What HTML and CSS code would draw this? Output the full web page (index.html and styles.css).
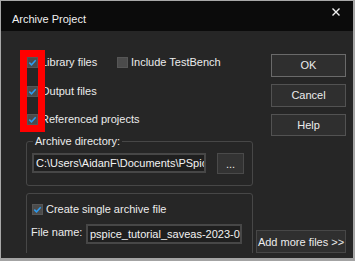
FILE: index.html
```html
<!DOCTYPE html>
<html lang="en">
<head>
  <meta charset="UTF-8">
  <title>Archive Project</title>
  <link rel="stylesheet" href="styles.css">
</head>
<body>
  <div class="window">
    <div class="titlebar">
      <span class="title">Archive Project</span>
      <svg class="close" width="8" height="8" viewBox="0 0 8 8">
        <path d="M0.5 0.5 L7.5 7.5 M7.5 0.5 L0.5 7.5" stroke="#f2f2f2" stroke-width="1.4"/>
      </svg>
    </div>

    <div class="content">
      <div class="main">
        <div class="options">
          <div class="row">
            <label class="check wide">
              <span class="box"><svg width="11" height="11" viewBox="0 0 11 11"><path d="M2.3 5.6 L4.5 7.8 L8.7 3.2" fill="none" stroke="#2e9cf0" stroke-width="1.5"/></svg></span>
              Library files
            </label>
            <label class="check tight">
              <span class="box"></span>
              Include TestBench
            </label>
          </div>
          <div class="row second">
            <label class="check">
              <span class="box"><svg width="11" height="11" viewBox="0 0 11 11"><path d="M2.3 5.6 L4.5 7.8 L8.7 3.2" fill="none" stroke="#2e9cf0" stroke-width="1.5"/></svg></span>
              Output files
            </label>
          </div>
          <div class="row third">
            <label class="check">
              <span class="box"><svg width="11" height="11" viewBox="0 0 11 11"><path d="M2.3 5.6 L4.5 7.8 L8.7 3.2" fill="none" stroke="#2e9cf0" stroke-width="1.5"/></svg></span>
              Referenced projects
            </label>
          </div>
        </div>

        <fieldset class="group dir-group">
          <legend>Archive directory:</legend>
          <div class="field-row">
            <div class="input dir">C:\Users\AidanF\Documents\PSpice</div>
            <button class="btn browse">...</button>
          </div>
        </fieldset>

        <div class="group single">
          <label class="check tight">
            <span class="box"><svg width="11" height="11" viewBox="0 0 11 11"><path d="M2.3 5.6 L4.5 7.8 L8.7 3.2" fill="none" stroke="#2e9cf0" stroke-width="1.5"/></svg></span>
            Create single archive file
          </label>
          <div class="field-row name-row">
            <span class="field-label">File name:</span>
            <div class="input name">pspice_tutorial_saveas-2023-05-10</div>
          </div>
        </div>
      </div>

      <div class="actions">
        <button class="btn primary">OK</button>
        <button class="btn">Cancel</button>
        <button class="btn">Help</button>
        <button class="btn more">Add more files &gt;&gt;</button>
      </div>
    </div>

    <!-- red annotation box drawn over the checkboxes -->
    <div class="highlight"></div>
  </div>
</body>
</html>
```

FILE: styles.css
```css
* {
  box-sizing: border-box;
}

html, body {
  margin: 0;
}

body {
  background: #a3a3a3;
  font-family: 'Liberation Sans', Arial, sans-serif;
  font-size: 11px;
  color: #ececec;
}

.window {
  position: relative;
  width: 354px;
  height: 258px;
  border: 1px solid #a8a8a8;
  border-bottom: 0;
  background: #262626;
}

.titlebar {
  display: flex;
  justify-content: space-between;
  align-items: flex-start;
  height: 30px;
  padding: 0 13px 0 11px;
  background: #0b0b0b;
}

.title {
  padding-top: 12px;
  line-height: 13px;
  color: #f0f0f0;
}

.close {
  margin-top: 7px;
}

.content {
  display: flex;
  height: 222px;
  overflow: hidden;
}

.main {
  width: 252px;
  padding: 26px 0 0 25px;
}

/* checkboxes */
.row {
  display: flex;
  height: 11px;
  padding-left: 1px;
}

.row.second {
  margin-top: 18px;
}

.row.third {
  margin-top: 17px;
}

.check {
  display: flex;
  align-items: center;
  gap: 3px;
  height: 11px;
  line-height: 11px;
  white-space: nowrap;
}

.check.wide {
  width: 90px;
}

.check.tight {
  gap: 3px;
}

.box {
  display: block;
  width: 11px;
  height: 11px;
  background: #4b4b4b;
  border: 1px solid #565656;
  position: relative;
}

.box svg {
  display: block;
  margin: -1px;
}

/* group boxes */
.group {
  width: 227px;
  margin: 0;
  border: 1px solid #474747;
  border-radius: 3px;
  min-inline-size: 0;
}

.dir-group {
  margin-top: 10px;
  padding: 5px 8px 11px 5px;
}

.dir-group legend {
  margin-left: 1px;
  padding: 0 2px;
  line-height: 13px;
  color: #ececec;
}

.single {
  margin-top: 7px;
  padding: 10px 10px 20px 5px;
}

.field-row {
  display: flex;
  align-items: flex-start;
}

.input {
  height: 20px;
  padding: 0 2px;
  line-height: 16px;
  background: #1f1f1f;
  border: 2px solid #474747;
  white-space: nowrap;
  overflow: hidden;
  color: #f2f2f2;
}

.input.dir {
  width: 174px;
}

.name-row {
  margin-top: 9px;
  align-items: center;
}

.field-label {
  margin: -5px 0 0 -1px;
}

.input.name {
  width: 156px;
  margin-left: auto;
}

/* buttons */
.btn {
  display: block;
  height: 23px;
  padding: 0;
  font-family: inherit;
  font-size: 11px;
  color: #ececec;
  background: #2f2f2f;
  border: 1px solid #525252;
  text-align: center;
}

.browse {
  width: 27px;
  height: 21px;
  margin-left: 11px;
  background: #333333;
  border-color: #4a4a4a;
}

.actions {
  display: flex;
  flex-direction: column;
  align-items: flex-end;
  width: 90px;
  margin-left: 3px;
  padding-top: 23px;
}

.actions .btn {
  width: 75px;
}

.actions .btn + .btn {
  margin-top: 7px;
}

.btn.primary {
  border-color: #6a6a6a;
}

.actions .btn.more {
  width: 90px;
  margin-top: 94px;
  border-color: #474747;
}

.highlight {
  position: absolute;
  left: 19px;
  top: 49px;
  width: 25px;
  height: 82px;
  border: 7px solid #ff0000;
}
```
